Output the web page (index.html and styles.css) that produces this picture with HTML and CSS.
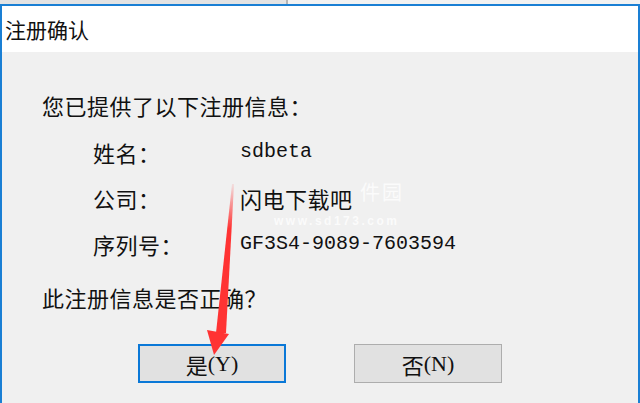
FILE: index.html
```html
<!DOCTYPE html>
<html>

<head>
    <title>注册确认</title>
    <link rel="stylesheet" href="styles.css">
</head>

<body>
    <div class="top-strip">
        <div class="strip-left"></div>
        <div class="strip-right"></div>
    </div>

    <div class="window">
        <div class="title-bar">注册确认</div>

        <div class="content">
            <p class="intro">您已提供了以下注册信息：</p>

            <div class="info">
                <span class="label">姓名：</span>
                <span class="value mono">sdbeta</span>

                <span class="label">公司：</span>
                <span class="value">闪电下载吧</span>

                <span class="label">序列号：</span>
                <span class="value mono">GF3S4-9089-7603594</span>
            </div>

            <p class="question">此注册信息是否正确？</p>

            <div class="buttons">
                <button class="btn btn-default">是<span class="key">(Y)</span></button>
                <button class="btn">否<span class="key">(N)</span></button>
            </div>
        </div>
    </div>

    <!-- watermark left by the screenshot site -->
    <div class="watermark">
        <span class="wm-name">件园</span>
        <span class="wm-url">www.sd173.com</span>
    </div>

    <!-- red arrow pointing at the yes button -->
    <svg class="arrow" width="60" height="180" viewBox="0 0 60 180">
        <defs>
            <linearGradient id="shaft" x1="0" y1="0" x2="0" y2="1">
                <stop offset="0" stop-color="#ff4040" stop-opacity="0.1" />
                <stop offset="0.3" stop-color="#ff3333" />
                <stop offset="1" stop-color="#ff3333" />
            </linearGradient>
        </defs>
        <polygon points="33,0 35,0 27,149 17,149" fill="url(#shaft)" />
        <polygon points="8,146 30,150 15,171" fill="#ff3333" />
    </svg>
</body>

</html>
```

FILE: styles.css
```css
body {
    background: #dcdcdc;
    font-family: "Noto Sans CJK SC", "Noto Sans", sans-serif;
    height: 403px;
    margin: 0;
    overflow: hidden;
    padding: 0;
    position: relative;
    width: 640px;
}

.top-strip {
    display: flex;
    height: 4px;
}

.strip-left {
    background: #e3e3e3;
    border-right: solid 2px #b4b4b4;
    width: 286px;
}

.strip-right {
    background: #f2f2f2;
    flex: 1;
}

.window {
    border: solid 2px #1a7fd4;
    border-bottom: none;
    display: flex;
    flex-direction: column;
    height: 397px;
}

.title-bar {
    align-items: center;
    background: white;
    color: #111;
    display: flex;
    font-size: 21px;
    height: 46px;
    padding-left: 3px;
}

.content {
    background: #f0f0f0;
    color: #111;
    flex: 1;
    font-size: 22px;
    letter-spacing: .5px;
    padding: 38px 0 0 40px;
}

.intro,
.question {
    line-height: 30px;
    margin: 0;
}

.info {
    display: grid;
    grid-row-gap: 16px;
    grid-template-columns: 147px auto;
    line-height: 30px;
    margin: 17px 0 0 51px;
}

.mono {
    font-family: "Liberation Mono", monospace;
    font-size: 20px;
    letter-spacing: 0;
}

.question {
    margin-top: 23px;
}

.buttons {
    display: flex;
    gap: 68px;
    margin: 32px 0 0 96px;
}

.btn {
    align-items: center;
    background: #e1e1e1;
    border: solid 1px #adadad;
    color: #111;
    display: flex;
    font-family: "Noto Sans CJK SC", sans-serif;
    font-size: 22px;
    height: 39px;
    justify-content: center;
    margin: 0;
    padding: 0;
    width: 148px;
}

.btn-default {
    border: solid 2px #0a78d7;
}

.key {
    font-family: "Liberation Serif", serif;
    font-size: 22px;
}

.watermark {
    color: white;
    display: flex;
    flex-direction: column;
    left: 274px;
    opacity: .75;
    position: absolute;
    top: 180px;
}

.wm-name {
    font-size: 20px;
    letter-spacing: 2px;
    line-height: 24px;
    margin-left: 86px;
}

.wm-url {
    font-family: "Liberation Sans", sans-serif;
    font-size: 12px;
    font-weight: bold;
    letter-spacing: 2.5px;
    line-height: 14px;
    margin-top: 10px;
}

.arrow {
    left: 199px;
    position: absolute;
    top: 184px;
}
```
